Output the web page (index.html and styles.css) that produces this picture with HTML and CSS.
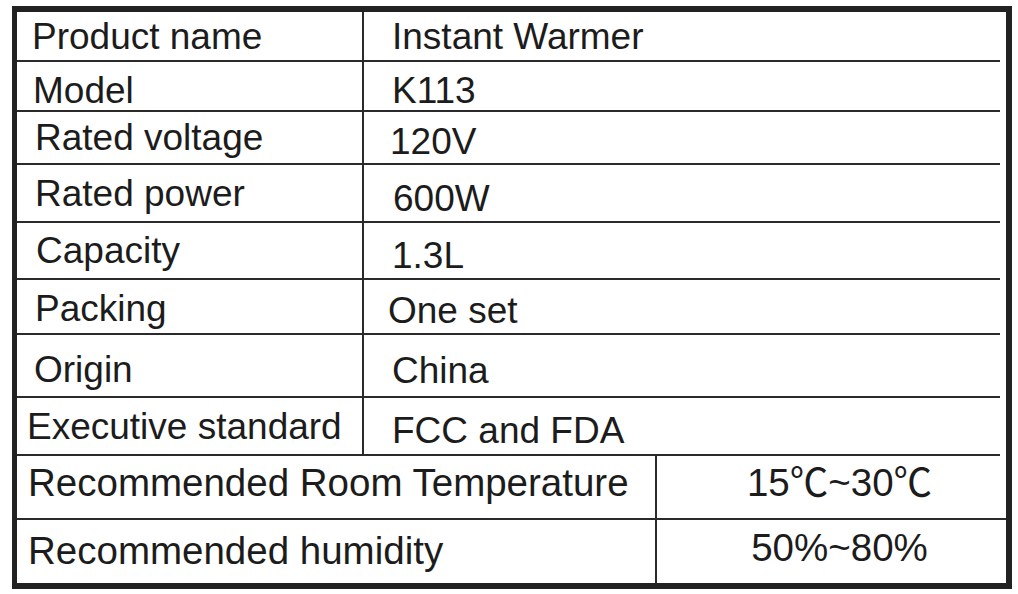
FILE: index.html
```html
<!DOCTYPE html>
<html lang="en">
<head>
<meta charset="utf-8">
<title>Instant Warmer specifications</title>
<link rel="stylesheet" href="styles.css">
</head>
<body>
<div class="sheet">
  <div class="upper">
    <div class="row r1">
      <div class="cell key k-a">Product name</div>
      <div class="cell val v-a">Instant Warmer</div>
    </div>
    <div class="row r2">
      <div class="cell key k-b dn4">Model</div>
      <div class="cell val v-a dn4">K113</div>
    </div>
    <div class="row r3">
      <div class="cell key k-c">Rated voltage</div>
      <div class="cell val v-c dn4">120V</div>
    </div>
    <div class="row r4">
      <div class="cell key k-c">Rated power</div>
      <div class="cell val v-d dn5">600W</div>
    </div>
    <div class="row r5">
      <div class="cell key k-d">Capacity</div>
      <div class="cell val v-e dn5">1.3L</div>
    </div>
    <div class="row r6">
      <div class="cell key k-c dn2">Packing</div>
      <div class="cell val v-f dn4">One set</div>
    </div>
    <div class="row r7">
      <div class="cell key k-e dn4">Origin</div>
      <div class="cell val v-a dn5">China</div>
    </div>
    <div class="row r8">
      <div class="cell key k-f">Executive standard</div>
      <div class="cell val v-a dn4">FCC and FDA</div>
    </div>
  </div>
  <div class="lower">
    <div class="row r9">
      <div class="cell wide k-g up4">Recommended Room Temperature</div>
      <div class="cell num up4">15℃~30℃</div>
    </div>
    <div class="row r10">
      <div class="cell wide k-g up2">Recommended humidity</div>
      <div class="cell num up4">50%~80%</div>
    </div>
  </div>
</div>
</body>
</html>
```
FILE: styles.css
```css
html, body {
  margin: 0;
  padding: 0;
  background: #ffffff;
}

body {
  font-family: "Liberation Sans", Arial, "Noto Sans CJK SC", sans-serif;
  color: #1c1c1c;
}

.sheet {
  box-sizing: border-box;
  width: 1000px;
  height: 583px;
  margin: 6px 0 0 12px;
  border-style: solid;
  border-color: #222222;
  border-width: 6px 6px 6px 5px;
  display: flex;
  flex-direction: column;
}

.upper {
  margin-right: 6px;
  display: flex;
  flex-direction: column;
}

.lower {
  display: flex;
  flex-direction: column;
}

.row {
  box-sizing: border-box;
  display: flex;
  border-bottom: 2px solid #2a2a2a;
}

.r10 { border-bottom: none; }

.r1 { height: 50px; }
.r2 { height: 50px; }
.r3 { height: 53px; }
.r4 { height: 58px; }
.r5 { height: 57px; }
.r6 { height: 55px; }
.r7 { height: 63px; }
.r8 { height: 58px; }
.r9 { height: 64px; }
.r10 { height: 63px; }

.cell {
  box-sizing: border-box;
  display: flex;
  align-items: center;
  font-size: 37px;
  line-height: 41px;
  white-space: nowrap;
}

.lower .cell {
  font-size: 38.5px;
  line-height: 43px;
}

.key {
  width: 347px;
  border-right: 2px solid #2a2a2a;
}

.val {
  flex: 1;
}

.wide {
  width: 640px;
  border-right: 2px solid #2a2a2a;
}

.num {
  flex: 1;
  justify-content: center;
  padding-left: 16px;
}

/* horizontal text insets */
.k-a { padding-left: 15px; }
.k-b { padding-left: 16px; }
.k-c { padding-left: 18px; }
.k-d { padding-left: 19px; }
.k-e { padding-left: 17px; }
.k-f { padding-left: 10px; }
.k-g { padding-left: 11px; }

.v-a { padding-left: 28px; }
.v-c { padding-left: 26px; }
.v-d { padding-left: 29px; }
.v-e { padding-left: 28px; }
.v-f { padding-left: 24px; }

/* vertical nudges: shift text down / up inside its row */
.dn2 { padding-top: 3px; }
.dn4 { padding-top: 8px; }
.dn5 { padding-top: 10px; }
.up2 { padding-bottom: 3px; }
.up4 { padding-bottom: 9px; }
```
